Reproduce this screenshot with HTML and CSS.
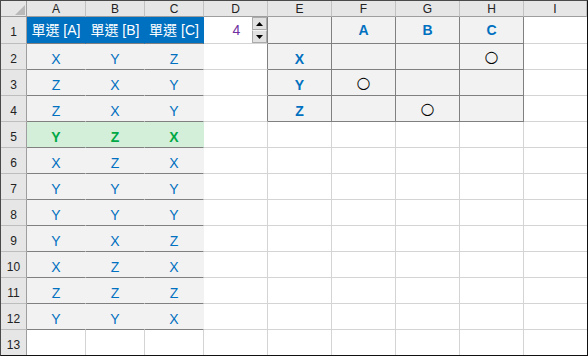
FILE: index.html
```html
<!DOCTYPE html>
<html lang="zh-Hant">
<head>
<meta charset="utf-8">
<title>單選</title>
<link rel="stylesheet" href="styles.css">
</head>
<body>
<div class="sheet">
  <!-- header row -->
  <div class="ch corner"><svg class="tri" width="10" height="10" viewBox="0 0 10 10"><polygon points="10,0 10,10 0,10" fill="#b9b9b9"/></svg></div>
  <div class="ch">A</div><div class="ch">B</div><div class="ch">C</div><div class="ch">D</div>
  <div class="ch">E</div><div class="ch">F</div><div class="ch">G</div><div class="ch">H</div><div class="ch last">I</div>

  <!-- row 1 -->
  <div class="rh r1">1</div>
  <div class="c r1 ttl">單選 [A]</div><div class="c r1 ttl">單選 [B]</div><div class="c r1 ttl">單選 [C]</div>
  <div class="c r1 dkr spin-cell"><span class="num">4</span>
    <div class="spinner">
      <div class="sbtn"><svg width="7" height="4" viewBox="0 0 7 4"><polygon points="3.5,0 7,4 0,4" fill="#000"/></svg></div>
      <div class="sbtn"><svg width="7" height="4" viewBox="0 0 7 4"><polygon points="0,0 7,0 3.5,4" fill="#000"/></svg></div>
    </div>
  </div>
  <div class="c r1 tbl"></div><div class="c r1 tbl tb">A</div><div class="c r1 tbl tb">B</div><div class="c r1 tbl tb">C</div><div class="c r1 last"></div>

  <!-- row 2 -->
  <div class="rh">2</div>
  <div class="c opt">X</div><div class="c opt">Y</div><div class="c opt">Z</div>
  <div class="c dkr"></div>
  <div class="c tbl tb">X</div><div class="c tbl"></div><div class="c tbl"></div><div class="c tbl mark">○</div><div class="c last"></div>

  <!-- row 3 -->
  <div class="rh">3</div>
  <div class="c opt">Z</div><div class="c opt">X</div><div class="c opt">Y</div>
  <div class="c dkr"></div>
  <div class="c tbl tb">Y</div><div class="c tbl mark">○</div><div class="c tbl"></div><div class="c tbl"></div><div class="c last"></div>

  <!-- row 4 -->
  <div class="rh">4</div>
  <div class="c opt">Z</div><div class="c opt">X</div><div class="c opt">Y</div>
  <div class="c dkr"></div>
  <div class="c tbl tb">Z</div><div class="c tbl"></div><div class="c tbl mark">○</div><div class="c tbl"></div><div class="c last"></div>

  <!-- row 5 -->
  <div class="rh">5</div>
  <div class="c hit">Y</div><div class="c hit">Z</div><div class="c hit">X</div>
  <div class="c"></div><div class="c"></div><div class="c"></div><div class="c"></div><div class="c"></div><div class="c last"></div>

  <!-- row 6 -->
  <div class="rh">6</div>
  <div class="c opt">X</div><div class="c opt">Z</div><div class="c opt">X</div>
  <div class="c"></div><div class="c"></div><div class="c"></div><div class="c"></div><div class="c"></div><div class="c last"></div>

  <!-- row 7 -->
  <div class="rh">7</div>
  <div class="c opt">Y</div><div class="c opt">Y</div><div class="c opt">Y</div>
  <div class="c"></div><div class="c"></div><div class="c"></div><div class="c"></div><div class="c"></div><div class="c last"></div>

  <!-- row 8 -->
  <div class="rh">8</div>
  <div class="c opt">Y</div><div class="c opt">Y</div><div class="c opt">Y</div>
  <div class="c"></div><div class="c"></div><div class="c"></div><div class="c"></div><div class="c"></div><div class="c last"></div>

  <!-- row 9 -->
  <div class="rh">9</div>
  <div class="c opt">Y</div><div class="c opt">X</div><div class="c opt">Z</div>
  <div class="c"></div><div class="c"></div><div class="c"></div><div class="c"></div><div class="c"></div><div class="c last"></div>

  <!-- row 10 -->
  <div class="rh">10</div>
  <div class="c opt">X</div><div class="c opt">Z</div><div class="c opt">X</div>
  <div class="c"></div><div class="c"></div><div class="c"></div><div class="c"></div><div class="c"></div><div class="c last"></div>

  <!-- row 11 -->
  <div class="rh">11</div>
  <div class="c opt">Z</div><div class="c opt">Z</div><div class="c opt">Z</div>
  <div class="c"></div><div class="c"></div><div class="c"></div><div class="c"></div><div class="c"></div><div class="c last"></div>

  <!-- row 12 -->
  <div class="rh">12</div>
  <div class="c opt">Y</div><div class="c opt">Y</div><div class="c opt">X</div>
  <div class="c"></div><div class="c"></div><div class="c"></div><div class="c"></div><div class="c"></div><div class="c last"></div>

  <!-- row 13 -->
  <div class="rh bot">13</div>
  <div class="c bot"></div><div class="c bot"></div><div class="c bot"></div>
  <div class="c bot"></div><div class="c bot"></div><div class="c bot"></div><div class="c bot"></div><div class="c bot"></div><div class="c bot last"></div>
</div>
</body>
</html>
```

FILE: styles.css
```css
* { box-sizing: border-box; }

html, body {
  margin: 0;
  padding: 0;
  background: #ffffff;
}

.sheet {
  width: 588px;
  height: 356px;
  border-top: 1px solid #4a4a4a;
  border-left: 1px solid #4a4a4a;
  border-right: 1px solid #111111;
  border-bottom: 1px solid #111111;
  display: grid;
  grid-template-columns: 26px 59px 59px 59px 64px 64px 64px 64px 64px 63px;
  grid-template-rows: 16px 27px repeat(11, 26px) 25px;
  font-family: "Liberation Sans", "Noto Sans CJK TC", Arial, sans-serif;
  background: #ffffff;
}

/* generic cell */
.c {
  border-right: 1px solid #d4d4d4;
  border-bottom: 1px solid #d4d4d4;
  display: flex;
  align-items: flex-end;
  justify-content: center;
  padding-bottom: 2px;
  font-size: 14px;
  line-height: 16px;
  color: #0070c0;
  white-space: nowrap;
}

.last { border-right: none; }
.bot { border-bottom: none; }

/* column headers */
.ch {
  background: #e6e6e6;
  border-right: 1px solid #c2c2c2;
  border-bottom: 1px solid #9e9e9e;
  display: flex;
  align-items: center;
  justify-content: center;
  font-size: 12px;
  line-height: 14px;
  color: #222222;
}

.corner {
  border-right: 1px solid #9e9e9e;
  align-items: flex-end;
  justify-content: flex-end;
  padding: 0 1px 1px 0;
}

.tri { display: block; }

/* row headers */
.rh {
  background: #e6e6e6;
  border-right: 1px solid #9e9e9e;
  border-bottom: 1px solid #bdbdbd;
  display: flex;
  align-items: flex-end;
  justify-content: center;
  padding-bottom: 3px;
  font-size: 12px;
  line-height: 14px;
  color: #222222;
}

.rh.bot { border-bottom: none; }

/* row 1 baseline */
.r1 { padding-bottom: 5px; }
.rh.r1 { padding-bottom: 4px; }

/* title cells A1:C1 */
.ttl {
  background: #0070c0;
  border-right-color: #0070c0;
  border-bottom-color: #808080;
  color: #ffffff;
}

/* option cells A2:C12 */
.opt {
  background: #f2f2f2;
  border-right-color: #f2f2f2;
  border-bottom-color: #808080;
}

/* highlighted row */
.hit {
  background: #d3efda;
  border-right-color: #d3efda;
  border-bottom-color: #808080;
  color: #00a846;
  font-weight: bold;
}

/* D1 with spinner */
.spin-cell { position: relative; padding-left: 2px; }

.num { color: #7030a0; font-size: 14px; }

.dkr { border-right-color: #808080; }

.spinner {
  position: absolute;
  top: 0;
  right: 0;
  width: 15px;
  height: 26px;
  display: flex;
  flex-direction: column;
}

.sbtn {
  flex: 1;
  background: #e1e1e1;
  border: 1px solid #ababab;
  display: flex;
  align-items: center;
  justify-content: center;
}

.sbtn + .sbtn { border-top: 1px solid #f4f4f4; }

.sbtn svg { display: block; }

/* right-hand table E1:H4 */
.tbl {
  background: #f2f2f2;
  border-right-color: #808080;
  border-bottom-color: #808080;
}

.tb {
  font-weight: bold;
  color: #0070c0;
}

.mark {
  font-family: "DejaVu Sans", sans-serif;
  font-size: 16px;
  color: #000000;
  align-items: center;
  padding-bottom: 0;
}
```
